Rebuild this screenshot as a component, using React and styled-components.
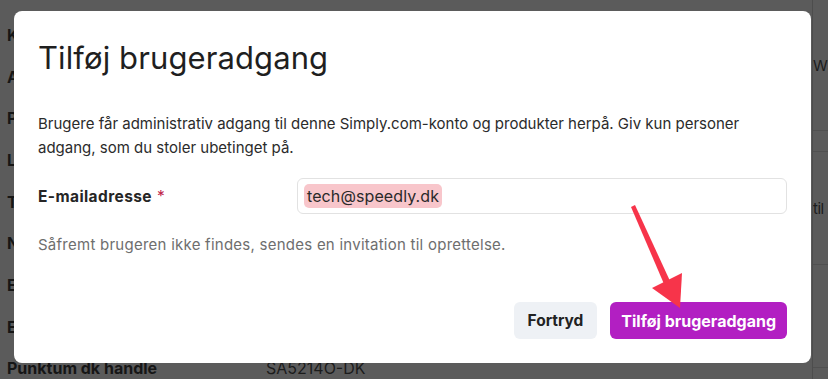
import React from "react";
import styled, { createGlobalStyle } from "styled-components";

const Global = createGlobalStyle`
  html, body { margin: 0; padding: 0; }
  body { width: 828px; height: 379px; overflow: hidden; background: #5b5b5b; font-family: "Inter", "Noto Sans", sans-serif; }
`;

const Page = styled.div`
  position: relative;
  width: 828px;
  height: 379px;
  overflow: hidden;
  background: #5b5b5b;
  display: flex;
`;

const BgTable = styled.div`
  flex: 1;
  display: flex;
  flex-direction: column;
  padding-top: 14px;
`;

const BgRow = styled.div`
  display: flex;
  height: 41.7px;
  flex-shrink: 0;
  align-items: center;
  font-size: 16px;
  color: #161616;
  font-weight: 700;
`;

const BgLabel = styled.div`
  width: 259px;
  padding-left: 7px;
`;

const BgValue = styled.div`
  font-weight: 400;
  color: #1c1c1c;
`;

const BgAside = styled.div`
  width: 15px;
  border-left: 1px solid #4d4d4d;
  display: flex;
  flex-direction: column;
  font-size: 15px;
  color: #1c1c1c;
  overflow: hidden;
`;

const BgCell = styled.div`
  height: ${(p) => p.$h}px;
  flex-shrink: 0;
  display: flex;
  align-items: center;
  border-bottom: 1px solid #505050;
  white-space: nowrap;
  letter-spacing: -0.5px;
`;

const Backdrop = styled.div`
  position: absolute;
  inset: 0;
  display: flex;
  align-items: flex-start;
  justify-content: flex-start;
  padding: 11px 0 0 14px;
`;

const Modal = styled.div`
  width: 797px;
  height: 352px;
  box-sizing: border-box;
  background: #fff;
  border-radius: 8px;
  padding: 28px 24px 24px 24px;
  display: flex;
  flex-direction: column;
`;

const Title = styled.h2`
  margin: 0;
  font-weight: 400;
  font-size: 31px;
  letter-spacing: 0.1px;
  color: #1f1f1f;
  line-height: 38px;
`;

const Body = styled.p`
  margin: 35px 0 0 0;
  font-size: 15px;
  line-height: 24px;
  color: #2b2b2b;
  max-width: 740px;
`;

const FieldRow = styled.div`
  display: flex;
  align-items: center;
  margin-top: 18px;
`;

const Label = styled.label`
  width: 259px;
  font-size: 15.5px;
  letter-spacing: 0.4px;
  font-weight: 700;
  color: #262626;
`;

const Required = styled.span`
  color: #c0234a;
  margin-left: 5px;
  font-weight: 400;
`;

const Input = styled.div`
  flex: 1;
  height: 36px;
  box-sizing: border-box;
  border: 1px solid #e2e2e2;
  border-radius: 6px;
  display: flex;
  align-items: center;
  padding: 0 6px;
`;

const Tag = styled.span`
  background: #f8c6cb;
  color: #2a2a2a;
  border-radius: 5px;
  padding: 3px 3px;
  font-size: 16px;
  letter-spacing: 0.1px;
  line-height: 18px;
`;

const Help = styled.div`
  margin-top: 21px;
  font-size: 15px;
  letter-spacing: 0.25px;
  color: #6e6e6e;
`;

const Footer = styled.div`
  margin-top: auto;
  display: flex;
  justify-content: flex-end;
  gap: 13px;
`;

const Button = styled.button`
  height: 37px;
  border: none;
  border-radius: 6px;
  padding: 0 ${(p) => (p.$primary ? "11px" : "14px")};
  font-family: "Inter", sans-serif;
  font-size: ${(p) => (p.$primary ? "16px" : "15.5px")};
  font-weight: 700;
  background: ${(p) => (p.$primary ? "#b21fc2" : "#eef1f5")};
  color: ${(p) => (p.$primary ? "#fff" : "#222")};
`;

const Arrow = styled.svg`
  position: absolute;
  left: 0;
  top: 0;
  pointer-events: none;
`;

const rows = [
  ["K", ""],
  ["A", ""],
  ["P", ""],
  ["L", ""],
  ["T", ""],
  ["N", ""],
  ["E", ""],
  ["E", ""],
  ["Punktum dk handle", "SA5214O-DK"],
];

export default function App() {
  return (
    <Page>
      <Global />
      <BgTable>
        {rows.map(([l, v], i) => (
          <BgRow key={i}>
            <BgLabel>{l}</BgLabel>
            <BgValue>{v}</BgValue>
          </BgRow>
        ))}
      </BgTable>
      <BgAside>
        <BgCell $h={130}>WS</BgCell>
        <BgCell $h={20} />
        <BgCell $h={112}>til</BgCell>
        <BgCell $h={102} />
      </BgAside>
      <Backdrop>
        <Modal>
          <Title>Tilføj brugeradgang</Title>
          <Body>
            Brugere får administrativ adgang til denne Simply.com-konto og produkter herpå. Giv kun personer
            adgang, som du stoler ubetinget på.
          </Body>
          <FieldRow>
            <Label>
              E-mailadresse<Required>*</Required>
            </Label>
            <Input>
              <Tag>tech@speedly.dk</Tag>
            </Input>
          </FieldRow>
          <Help>Såfremt brugeren ikke findes, sendes en invitation til oprettelse.</Help>
          <Footer>
            <Button>Fortryd</Button>
            <Button $primary>Tilføj brugeradgang</Button>
          </Footer>
        </Modal>
      </Backdrop>
      <Arrow width="828" height="379" viewBox="0 0 828 379">
        <polygon points="631,207 635,205 670,281 664,284" fill="#f7344a" />
        <polygon points="652,288 682,273 680,308" fill="#f7344a" />
      </Arrow>
    </Page>
  );
}
